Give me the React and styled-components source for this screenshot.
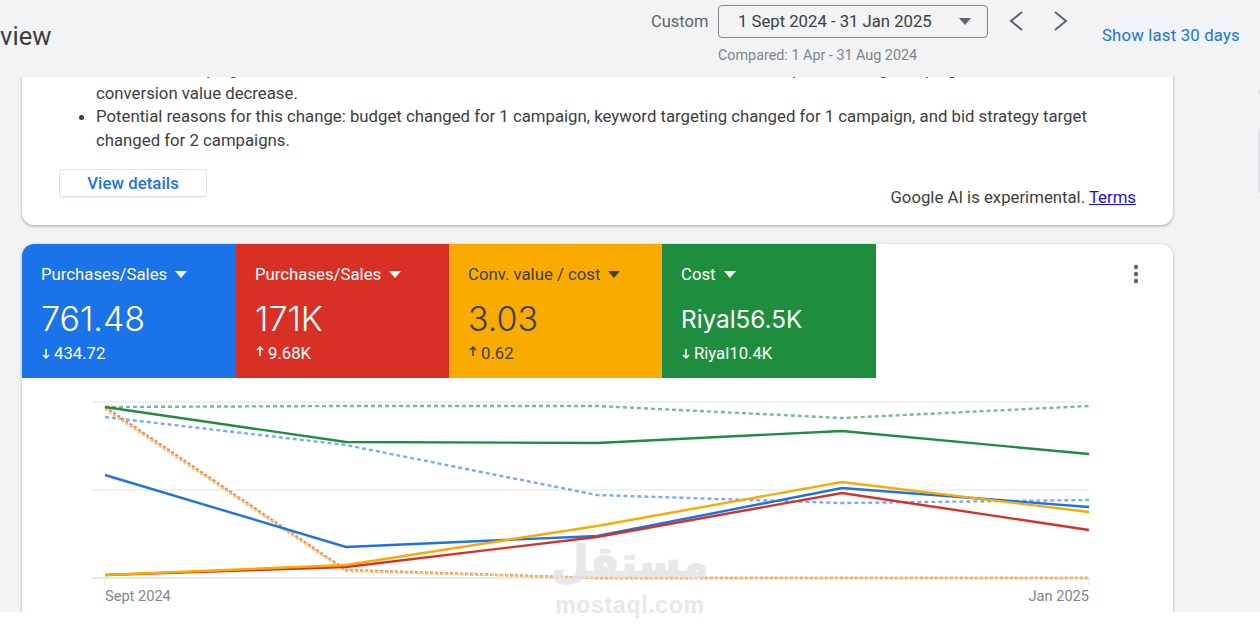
import React from 'react';
import styled, { createGlobalStyle } from 'styled-components';

const GlobalStyle = createGlobalStyle`
  html, body {
    margin: 0;
    padding: 0;
    background: #fff;
  }
  body {
    font-family: Roboto, 'Liberation Sans', sans-serif;
    overflow: hidden;
  }
`

const Page = styled.div`
  position: relative;
  width: 1260px;
  height: 630px;
  display: flex;
  flex-direction: column;
  overflow: hidden;
  background: #fff;
`

const Viewport = styled.div`
  height: 612px;
  display: flex;
  flex-direction: column;
  overflow: hidden;
  background: #f1f3f4;
`

const Header = styled.header`
  position: relative;
  z-index: 2;
  flex: none;
  height: 77px;
  display: flex;
  padding-right: 20px;
  background: #f1f3f4;
`

const PageTitle = styled.h1`
  flex: 1;
  margin: 22px 0 0 -52px;
  font-size: 25.5px;
  line-height: 28px;
  font-weight: 400;
  color: #3c4043;
  white-space: nowrap;
`

const DateBlock = styled.div`
  display: flex;
  flex-direction: column;
  width: 337px;
  padding-top: 5px;
`

const DateRow = styled.div`
  display: flex;
  align-items: center;
`

const CustomLabel = styled.span`
  width: 67px;
  font-size: 16.5px;
  color: #5f6368;
`

const DateSelect = styled.div`
  box-sizing: border-box;
  width: 270px;
  height: 33px;
  display: flex;
  align-items: center;
  justify-content: space-between;
  padding: 0 16px 0 19px;
  border: 1px solid #80868b;
  border-radius: 4px;
  font-size: 16.7px;
  color: #3c4043;
`

const Caret = styled.span`
  width: 0;
  height: 0;
  border-left: 6.5px solid transparent;
  border-right: 6.5px solid transparent;
  border-top: 7px solid ${p => p.$color || '#5f6368'};
`

const Compared = styled.div`
  margin: 9px 0 0 67px;
  font-size: 14.35px;
  line-height: 17px;
  color: #80868b;
`

const Pager = styled.div`
  display: flex;
  gap: 21px;
  margin: 9px 0 0 16px;
  height: 24px;
`

const PagerIcon = styled.svg`
  width: 24px;
  height: 24px;
  fill: none;
  stroke: #5f6368;
  stroke-width: 2;
`

const ShowLast = styled.a`
  margin: 26px 0 0 29px;
  width: 138px;
  font-size: 16.7px;
  line-height: 19px;
  letter-spacing: 0.2px;
  color: #1a73e8;
  white-space: nowrap;
`

const Content = styled.main`
  position: relative;
  flex: 1;
  overflow: hidden;
  padding: 0 87px 0 22px;
`

const Card = styled.section`
  background: #fff;
  border-radius: 12px;
  box-shadow: 0 1px 3px rgba(60, 64, 67, 0.45);
`

const InsightCard = styled(Card)`
  margin-top: -20px;
  height: 168px;
  display: flex;
  flex-direction: column;
  border-radius: 0 0 12px 12px;
  overflow: hidden;
`

const InsightList = styled.ul`
  margin: 0;
  padding: 1px 70px 0 74px;
  font-size: 16.75px;
  line-height: 23.5px;
  color: #3c4043;
`

const InsightFooter = styled.div`
  display: flex;
  justify-content: space-between;
  padding: 17px 37px 0;
`

const DetailsButton = styled.button`
  box-sizing: border-box;
  width: 148px;
  height: 28px;
  background: #fff;
  border: 1px solid #e0e3e6;
  border-radius: 4px;
  box-shadow: 0 1px 1px rgba(60, 64, 67, 0.08);
  font-family: inherit;
  font-size: 16.7px;
  font-weight: 500;
  letter-spacing: 0.1px;
  color: #1a73e8;
  padding: 0;
`

const AiNote = styled.div`
  margin-top: 19px;
  font-size: 16.75px;
  line-height: 19px;
  color: #3c4043;
`

const TermsLink = styled.a`
  color: #1a0dee;
  text-decoration: underline;
`

const ChartCard = styled(Card)`
  position: relative;
  margin-top: 19px;
  height: 400px;
  overflow: hidden;
`

const Scorecards = styled.div`
  display: grid;
  grid-template-columns: 214px 213px 213px 214px;
  width: 854px;
  height: 134px;
`

const Scorecard = styled.div`
  box-sizing: border-box;
  padding: 21px 0 0 19px;
  background: ${p => p.$bg};
  color: ${p => p.$fg || '#fff'};
`

const MetricName = styled.div`
  display: flex;
  align-items: center;
  gap: 8px;
  font-size: 16.75px;
  line-height: 19px;
`

const MetricValue = styled.div`
  margin-top: 14px;
  font-family: Inter, Roboto, sans-serif;
  font-weight: ${p => p.$small ? 400 : 350};
  font-size: ${p => p.$small ? '24.3px' : '34px'};
  line-height: 42px;
  height: 42px;
`

const MetricDelta = styled.div`
  display: flex;
  align-items: center;
  gap: 3px;
  margin-top: 4px;
  font-size: 16.7px;
  line-height: 19px;
`

const DeltaArrow = styled.svg`
  width: 10px;
  height: 12px;
  fill: none;
  stroke: currentColor;
  stroke-width: 1.5;
  ${p => p.$up && 'margin-top: -5px;'}
`

const MoreIcon = styled.svg`
  position: absolute;
  top: 18px;
  right: 25px;
  width: 24px;
  height: 24px;
  fill: #5f6368;
`

const ChartSvg = styled.svg`
  display: block;
  width: 1151px;
  height: 266px;
`

const AxisLabel = styled.text`
  font-family: Roboto, 'Liberation Sans', sans-serif;
  font-size: 14.6px;
  fill: #80868b;
`

const Watermark = styled.div`
  position: absolute;
  left: 542px;
  top: 533px;
  width: 176px;
  display: flex;
  flex-direction: column;
  align-items: center;
  color: #e4e4e4;
  opacity: 0.85;
  pointer-events: none;
`

const WatermarkArabic = styled.div`
  font-family: 'DejaVu Sans', sans-serif;
  font-size: 43px;
  line-height: 58px;
  font-weight: 700;
  height: 58px;
  -webkit-text-stroke: 1.5px #e4e4e4;
`

const WatermarkLatin = styled.div`
  font-family: 'Liberation Sans', sans-serif;
  font-size: 23px;
  line-height: 28px;
  font-weight: 700;
  letter-spacing: 0.7px;
`

const EdgeMark = styled.div`
  position: absolute;
  right: 0;
  top: ${p => p.$top}px;
  width: 2px;
  height: ${p => p.$height}px;
  background: #dfe1e4;
  border-radius: 2px 0 0 2px;
`

const metrics = [
  { name: 'Purchases/Sales', value: '761.48', delta: '434.72', down: true, bg: '#1a73e8' },
  { name: 'Purchases/Sales', value: '171K', delta: '9.68K', bg: '#d93025' },
  { name: 'Conv. value / cost', value: '3.03', delta: '0.62', bg: '#f9ab00', fg: '#3c4043' },
  { name: 'Cost', value: 'Riyal56.5K', delta: 'Riyal10.4K', down: true, bg: '#1e8e3e', small: true },
]

// chart coords are relative to the card, card starts at x=22 y=244
const series = [
  { color: '#74bd8c', dash: '4 3', points: '83,163 324,162 575,162 820,174 1067,162' },
  { color: '#7baaf7', dash: '4 3', points: '83,173 324,201 575,251 820,259 1067,256' },
  { color: '#e67c73', dash: '3 2', points: '83,163 324,326 575,334 820,334 1067,334' },
  { color: '#fbc15e', dash: '3 2', points: '83,165 324,327 575,334 820,334 1067,334' },
  { color: '#1e8e3e', points: '83,163 324,198 575,199 820,187 1067,210' },
  { color: '#1a73e8', points: '83,231 324,303 575,292 820,244 1067,263' },
  { color: '#d93025', points: '83,331 324,323 575,293 820,249 1067,286' },
  { color: '#f9ab00', points: '83,331 324,321 575,282 820,238 1067,268' },
]

function Arrow({ down }) {
  return (
    <DeltaArrow viewBox="0 0 10 12" $up={!down}>
      {down
        ? <path d="M5 1v9M2 7l3 3 3-3"/>
        : <path d="M5 11V2M2 5l3-3 3 3"/>}
    </DeltaArrow>
  )
}

function App() {
  return (
    <>
      <GlobalStyle/>
      <Page>
        <Viewport>
          <Header>
            <PageTitle>Overview</PageTitle>
            <DateBlock>
              <DateRow>
                <CustomLabel>Custom</CustomLabel>
                <DateSelect>
                  1 Sept 2024 - 31 Jan 2025
                  <Caret/>
                </DateSelect>
              </DateRow>
              <Compared>Compared: 1 Apr - 31 Aug 2024</Compared>
            </DateBlock>
            <Pager>
              <PagerIcon viewBox="0 0 24 24"><path d="M18 3L7 12l11 9"/></PagerIcon>
              <PagerIcon viewBox="0 0 24 24"><path d="M6 3l11 9-11 9"/></PagerIcon>
            </Pager>
            <ShowLast>Show last 30 days</ShowLast>
          </Header>
          <Content>
            <InsightCard>
              <InsightList>
                <li>
                  Across all campaigns, the total conversion value fell and then declined while the reduction in spend and big campaign increase, with a
                  conversion value decrease.
                </li>
                <li>
                  Potential reasons for this change: budget changed for 1 campaign, keyword targeting changed for 1 campaign, and bid strategy target
                  changed for 2 campaigns.
                </li>
              </InsightList>
              <InsightFooter>
                <DetailsButton>View details</DetailsButton>
                <AiNote>Google AI is experimental. <TermsLink>Terms</TermsLink></AiNote>
              </InsightFooter>
            </InsightCard>
            <ChartCard>
              <Scorecards>
                {metrics.map((m, i) => (
                  <Scorecard key={i} $bg={m.bg} $fg={m.fg}>
                    <MetricName>{m.name}<Caret $color={m.fg || '#fff'}/></MetricName>
                    <MetricValue $small={m.small}>{m.value}</MetricValue>
                    <MetricDelta><Arrow down={m.down}/>{m.delta}</MetricDelta>
                  </Scorecard>
                ))}
              </Scorecards>
              <MoreIcon viewBox="0 0 24 24">
                <circle cx="12" cy="5" r="2.2"/>
                <circle cx="12" cy="12" r="2.2"/>
                <circle cx="12" cy="19" r="2.2"/>
              </MoreIcon>
              <ChartSvg viewBox="0 134 1151 266">
                <line x1="70" x2="1067" y1="158" y2="158" stroke="#ebebeb" strokeWidth="1.5"/>
                <line x1="70" x2="1067" y1="246" y2="246" stroke="#ebebeb" strokeWidth="1.5"/>
                <line x1="70" x2="1067" y1="334" y2="334" stroke="#e3e3e3" strokeWidth="1.5"/>
                <line x1="83" x2="83" y1="334" y2="341" stroke="#e3e3e3"/>
                <line x1="1067" x2="1067" y1="334" y2="341" stroke="#e3e3e3"/>
                {series.map((s, i) => (
                  <polyline key={i} points={s.points} fill="none" stroke={s.color} strokeWidth="2.4" strokeDasharray={s.dash}/>
                ))}
                <AxisLabel x="83" y="357">Sept 2024</AxisLabel>
                <AxisLabel x="1067" y="357" textAnchor="end">Jan 2025</AxisLabel>
              </ChartSvg>
            </ChartCard>
            <EdgeMark $top={13} $height={5}/>
            <EdgeMark $top={53} $height={63}/>
          </Content>
        </Viewport>
        <Watermark>
          <WatermarkArabic>مستقل</WatermarkArabic>
          <WatermarkLatin>mostaql.com</WatermarkLatin>
        </Watermark>
      </Page>
    </>
  )
}

export default App;
